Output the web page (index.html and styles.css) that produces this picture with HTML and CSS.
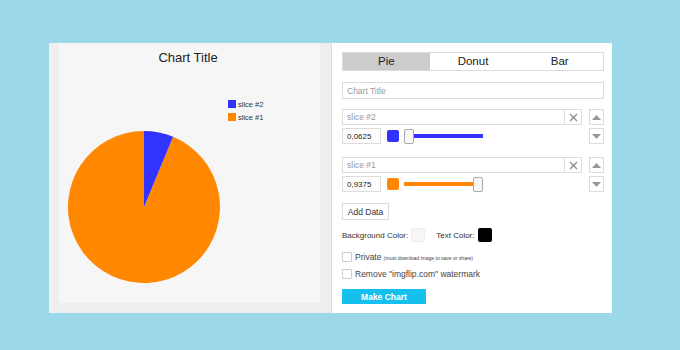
FILE: index.html
```html
<!DOCTYPE html>
<html lang="en">
<head>
    <meta charset="UTF-8">
    <title>Pie Chart Maker</title>
    <link rel="stylesheet" href="styles.css">
</head>
<body>
    <div class="maker">
        <div class="preview">
            <div class="canvas">
                <svg width="261" height="260" viewBox="0 0 261 260">
                    <text x="129" y="19" text-anchor="middle" class="chart-title">Chart Title</text>
                    <rect x="169" y="57" width="8" height="8" fill="#3333ff"/>
                    <text x="179" y="64" class="legend">slice #2</text>
                    <rect x="169" y="70" width="8" height="8" fill="#ff8800"/>
                    <text x="179" y="77" class="legend">slice #1</text>
                    <path d="M85,164 L114.08,93.79 A76,76 0 1,1 85,88 Z" fill="#ff8800"/>
                    <path d="M85,164 L85,88 A76,76 0 0,1 114.08,93.79 Z" fill="#3333ff"/>
                </svg>
            </div>
        </div>

        <div class="controls">
            <div class="tabs">
                <div class="tab active">Pie</div>
                <div class="tab">Donut</div>
                <div class="tab">Bar</div>
            </div>

            <input type="text" class="title-input" placeholder="Chart Title">

            <div class="slice">
                <div class="slice-main">
                    <div class="name-row">
                        <input type="text" class="name-input" placeholder="slice #2">
                        <div class="remove">
                            <svg width="9" height="9" viewBox="0 0 9 9"><path d="M1 1 L8 8 M8 1 L1 8" stroke="#888" stroke-width="1.2"/></svg>
                        </div>
                    </div>
                    <div class="value-row">
                        <input type="text" class="value-input" value="0,0625">
                        <div class="swatch" style="background: #3333ff;"></div>
                        <div class="slider">
                            <div class="track" style="background: #3333ff;"></div>
                            <div class="thumb" style="left: 0px;"></div>
                        </div>
                    </div>
                </div>
                <div class="move">
                    <div class="move-btn"><svg width="9" height="5" viewBox="0 0 9 5"><path d="M0 5 L4.5 0 L9 5 Z" fill="#999"/></svg></div>
                    <div class="move-btn"><svg width="9" height="5" viewBox="0 0 9 5"><path d="M0 0 L4.5 5 L9 0 Z" fill="#999"/></svg></div>
                </div>
            </div>

            <div class="slice">
                <div class="slice-main">
                    <div class="name-row">
                        <input type="text" class="name-input" placeholder="slice #1">
                        <div class="remove">
                            <svg width="9" height="9" viewBox="0 0 9 9"><path d="M1 1 L8 8 M8 1 L1 8" stroke="#888" stroke-width="1.2"/></svg>
                        </div>
                    </div>
                    <div class="value-row">
                        <input type="text" class="value-input" value="0,9375">
                        <div class="swatch" style="background: #ff8800;"></div>
                        <div class="slider">
                            <div class="track" style="background: #ff8800;"></div>
                            <div class="thumb" style="left: 69px;"></div>
                        </div>
                    </div>
                </div>
                <div class="move">
                    <div class="move-btn"><svg width="9" height="5" viewBox="0 0 9 5"><path d="M0 5 L4.5 0 L9 5 Z" fill="#999"/></svg></div>
                    <div class="move-btn"><svg width="9" height="5" viewBox="0 0 9 5"><path d="M0 0 L4.5 5 L9 0 Z" fill="#999"/></svg></div>
                </div>
            </div>

            <button type="button" class="add-data">Add Data</button>

            <div class="colors">
                <span>Background Color:</span>
                <div class="color-box" style="background: #f6f6f6;"></div>
                <span class="text-color-label">Text Color:</span>
                <div class="color-box" style="background: #000;"></div>
            </div>

            <label class="check">
                <span class="box"></span>
                <span>Private <small>(must download image to save or share)</small></span>
            </label>
            <label class="check">
                <span class="box"></span>
                <span>Remove "imgflip.com" watermark</span>
            </label>

            <button type="button" class="make-chart">Make Chart</button>
        </div>
    </div>
</body>
</html>
```

FILE: styles.css
```css
* {
    margin: 0;
    padding: 0;
    box-sizing: border-box;
}

body {
    font-family: 'Liberation Sans', Arial, sans-serif;
    background: #9bd8e9;
    padding: 43px 0 0 49px;
}

.maker {
    display: flex;
    width: 563px;
    height: 270px;
}

.preview {
    width: 283px;
    background: #eeeeee;
    padding: 0 11px 10px 10px;
    border-right: 1px solid #dcdcdc;
}

.canvas {
    width: 261px;
    height: 260px;
    background: #f6f6f6;
}

.canvas svg {
    display: block;
}

.chart-title {
    font-family: 'Liberation Sans', Arial, sans-serif;
    font-size: 13px;
    fill: #222;
}

.legend {
    font-family: 'Liberation Sans', Arial, sans-serif;
    font-size: 7.5px;
    fill: #333;
}

.controls {
    width: 280px;
    background: white;
    padding: 9px 8px 0 10px;
    font-size: 9px;
    color: #333;
}

.tabs {
    display: flex;
    height: 19px;
    border: 1px solid #ddd;
}

.tab {
    flex: 1;
    text-align: center;
    font-size: 11.5px;
    line-height: 17px;
    color: #222;
}

.tab.active {
    background: #cccccc;
}

input[type="text"] {
    font-family: 'Liberation Sans', Arial, sans-serif;
    border: 1px solid #dcdcdc;
    outline: none;
    color: #222;
    padding: 0 4px;
}

input::placeholder {
    color: #999;
}

.title-input {
    display: block;
    width: 100%;
    height: 17px;
    margin-top: 11px;
    font-size: 8.5px;
}

.slice {
    display: flex;
    margin-top: 10px;
}

.slice + .slice {
    margin-top: 13px;
}

.slice-main {
    width: 240px;
}

.name-row {
    display: flex;
    height: 16px;
}

.name-input {
    width: 223px;
    height: 16px;
    font-size: 8.5px;
}

.remove {
    width: 17px;
    height: 16px;
    border: 1px solid #dcdcdc;
    border-left: none;
    display: flex;
    align-items: center;
    justify-content: center;
}

.value-row {
    display: flex;
    align-items: center;
    height: 16px;
    margin-top: 3px;
}

.value-input {
    width: 39px;
    height: 16px;
    font-size: 8px;
}

.swatch {
    width: 12px;
    height: 12px;
    border-radius: 2px;
    margin-left: 6px;
}

.slider {
    position: relative;
    width: 79px;
    height: 15px;
    margin-left: 5px;
    display: flex;
    align-items: center;
}

.track {
    width: 100%;
    height: 4px;
}

.thumb {
    position: absolute;
    top: 0;
    width: 10px;
    height: 15px;
    background: #f8f8f8;
    border: 1px solid #aaa;
    border-radius: 2px;
}

.move {
    margin-left: 7px;
    display: flex;
    flex-direction: column;
    gap: 3px;
}

.move-btn {
    width: 15px;
    height: 16px;
    border: 1px solid #dcdcdc;
    display: flex;
    align-items: center;
    justify-content: center;
}

.add-data {
    display: block;
    margin-top: 11px;
    width: 47px;
    height: 17px;
    background: white;
    border: 1px solid #dcdcdc;
    font-family: 'Liberation Sans', Arial, sans-serif;
    font-size: 8.5px;
    color: #333;
}

.colors {
    display: flex;
    align-items: center;
    margin-top: 8px;
    height: 14px;
    font-size: 8px;
}

.color-box {
    width: 14px;
    height: 14px;
    border-radius: 2px;
    margin-left: 3px;
}

.colors span:first-child + .color-box {
    border: 1px solid #eee;
}

.text-color-label {
    margin-left: 11px;
}

.check {
    display: flex;
    align-items: center;
    font-size: 8.5px;
    color: #444;
    margin-top: 10px;
    height: 10px;
}

.check + .check {
    margin-top: 7px;
}

.check small {
    font-size: 5px;
}

.box {
    width: 10px;
    height: 10px;
    border: 1px solid #ccc;
    border-radius: 1px;
    margin-right: 3px;
}

.make-chart {
    display: block;
    margin-top: 10px;
    width: 84px;
    height: 15px;
    background: #15c0ee;
    border: none;
    color: white;
    font-family: 'Liberation Sans', Arial, sans-serif;
    font-weight: bold;
    font-size: 8.5px;
}
```
